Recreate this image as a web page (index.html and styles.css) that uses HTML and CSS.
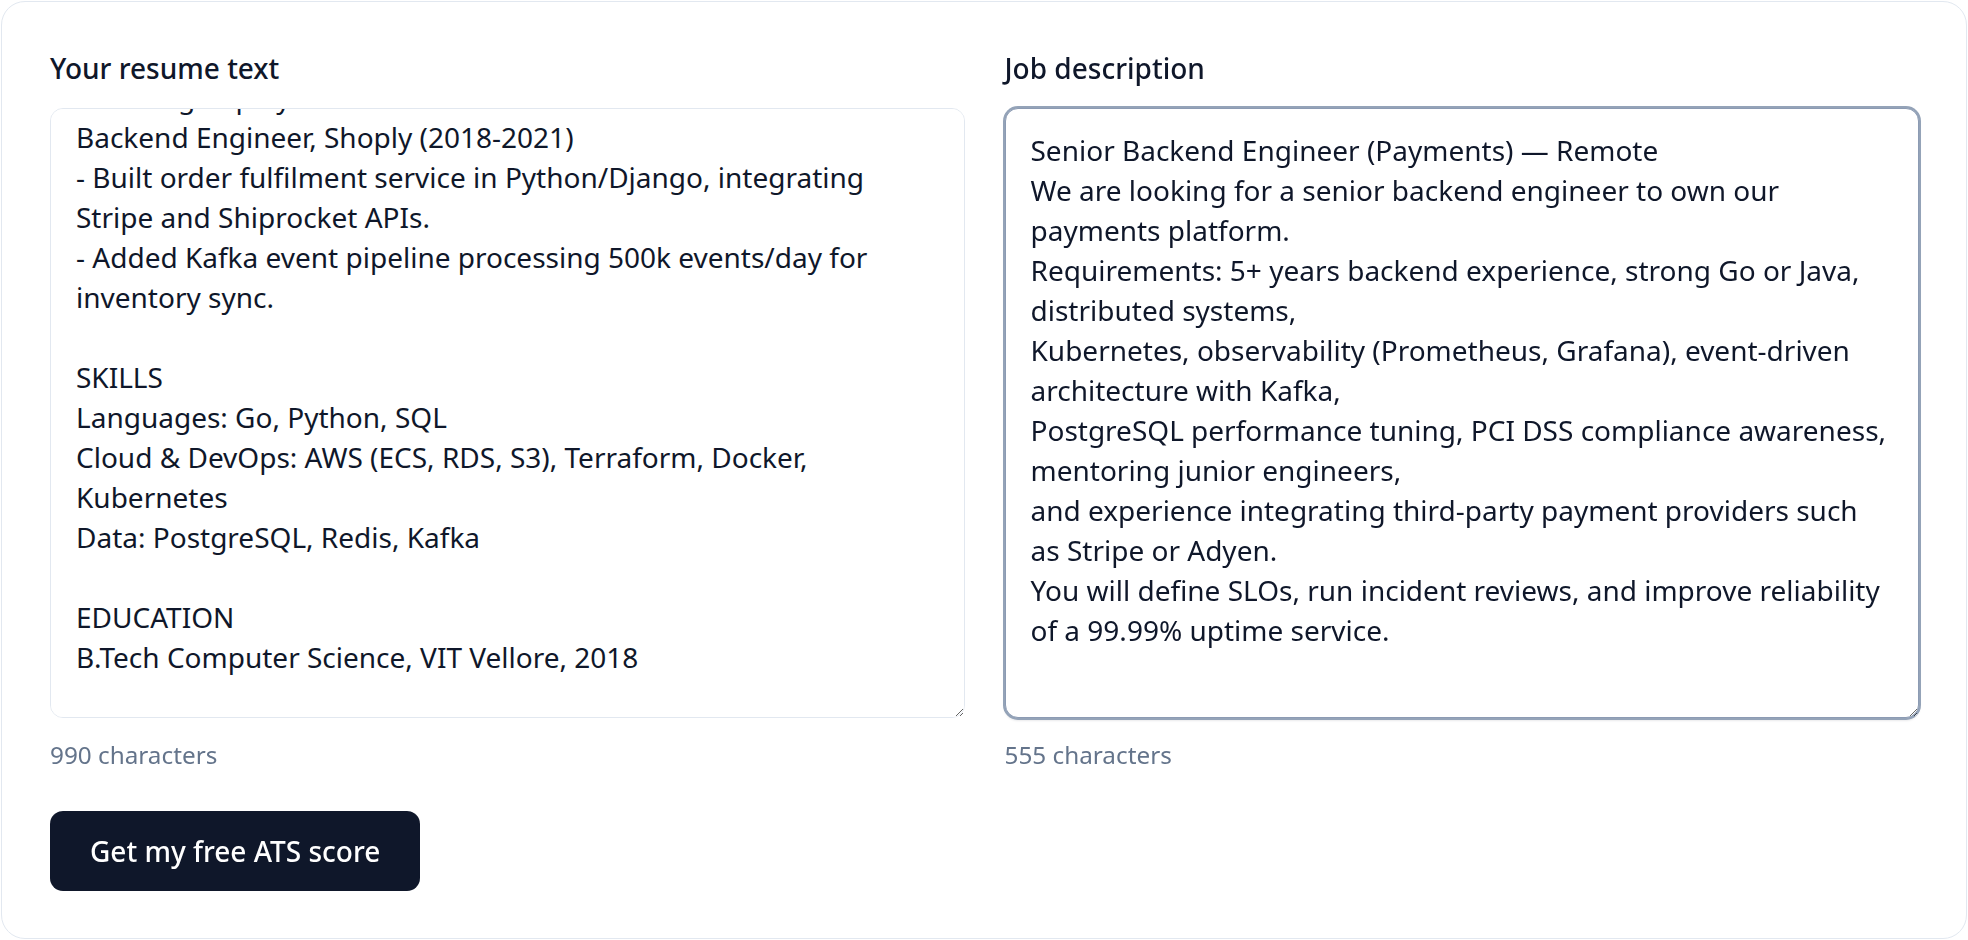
FILE: index.html
```html
<!DOCTYPE html>
<html lang="en">
<head>
<meta charset="utf-8">
<title>ATS score</title>
<link rel="stylesheet" href="styles.css">
</head>
<body>
<form class="card">
  <div class="fields">
    <div class="field">
      <label class="label" for="resume">Your resume text</label>
      <textarea id="resume" class="input resume" spellcheck="false">Arjun Mehta
Senior Software Engineer · Bengaluru, India
arjun.mehta@example.com · +91 98450 12345

SUMMARY
Backend engineer with 6 years of experience building payment and order systems in Go and Python.

EXPERIENCE
Software Engineer II, Finlytics (2021-Present)
- Designed a Go microservice handling 2M payment requests/day with 99.95% uptime.
- Cut p95 API latency by 40% through PostgreSQL tuning and Redis caching.
- Owning deploy and rollback automation for 40+ services.
Backend Engineer, Shoply (2018-2021)
- Built order fulfilment service in Python/Django, integrating Stripe and Shiprocket APIs.
- Added Kafka event pipeline processing 500k events/day for inventory sync.

SKILLS
Languages: Go, Python, SQL
Cloud &amp; DevOps: AWS (ECS, RDS, S3), Terraform, Docker, Kubernetes
Data: PostgreSQL, Redis, Kafka

EDUCATION
B.Tech Computer Science, VIT Vellore, 2018
</textarea>
      <p class="count">990 characters</p>
    </div>
    <div class="field">
      <label class="label" for="jd">Job description</label>
      <textarea id="jd" class="input is-focused" spellcheck="false">Senior Backend Engineer (Payments) — Remote
We are looking for a senior backend engineer to own our payments platform.
Requirements: 5+ years backend experience, strong Go or Java, distributed systems,
Kubernetes, observability (Prometheus, Grafana), event-driven architecture with Kafka,
PostgreSQL performance tuning, PCI DSS compliance awareness, mentoring junior engineers,
and experience integrating third-party payment providers such as Stripe or Adyen.
You will define SLOs, run incident reviews, and improve reliability of a 99.99% uptime service.</textarea>
      <p class="count">555 characters</p>
    </div>
  </div>
  <div class="actions">
    <button type="button" class="btn">Get my free ATS score</button>
  </div>
</form>
<script src="script.js"></script>
</body>
</html>
```

FILE: styles.css
```css
* { box-sizing: border-box; }

html, body {
  margin: 0;
  padding: 0;
  background: #ffffff;
}

body {
  font-family: "Noto Sans", "Open Sans", sans-serif;
  color: #0f172a;
}

.card {
  margin: 1px 1px 0 1px;
  background: #ffffff;
  border: 1px solid #e2e8f0;
  border-radius: 24px;
  padding: 48px 47px 47px 48px;
}

.fields {
  display: grid;
  grid-template-columns: 1fr 1fr;
  column-gap: 40px;
}

.field {
  display: flex;
  flex-direction: column;
  min-width: 0;
}

.label {
  display: block;
  font-size: 28px;
  line-height: 36px;
  font-weight: 500;
  color: #0f172a;
  margin-bottom: 22px;
}

.input {
  display: block;
  width: 100%;
  height: 610px;
  margin: 0;
  padding: 21px 25px;
  border: 1px solid #e2e8f0;
  border-radius: 13px;
  background: #ffffff;
  font-family: "Noto Sans", "Open Sans", sans-serif;
  font-size: 28px;
  line-height: 40px;
  color: #0f172a;
  outline: none;
  resize: vertical;
  scrollbar-width: none;
}

.input::-webkit-scrollbar { display: none; }

.input.is-focused {
  border-color: #8c9bb3;
  box-shadow: 0 0 0 2px #94a3b8, 0 2px 3px rgba(15, 23, 42, 0.18);
}

.count {
  margin: 21px 0 0;
  font-size: 24.3px;
  line-height: 32px;
  color: #64748b;
}

.actions {
  display: flex;
  margin-top: 40px;
}

.btn {
  height: 80px;
  padding: 0 40px;
  border: none;
  border-radius: 13px;
  background: #0f172a;
  color: #ffffff;
  font-family: "Noto Sans", "Open Sans", sans-serif;
  font-size: 28px;
  font-weight: 500;
  cursor: pointer;
}
```

FILE: script.js
```js
function scrollResume() {
  var r = document.getElementById('resume');
  r.scrollTop = r.scrollHeight - r.clientHeight - 21;
}
scrollResume();
if (document.fonts && document.fonts.ready) {
  document.fonts.ready.then(function () {
    scrollResume();
    requestAnimationFrame(scrollResume);
  });
}
window.addEventListener('load', scrollResume);
```
